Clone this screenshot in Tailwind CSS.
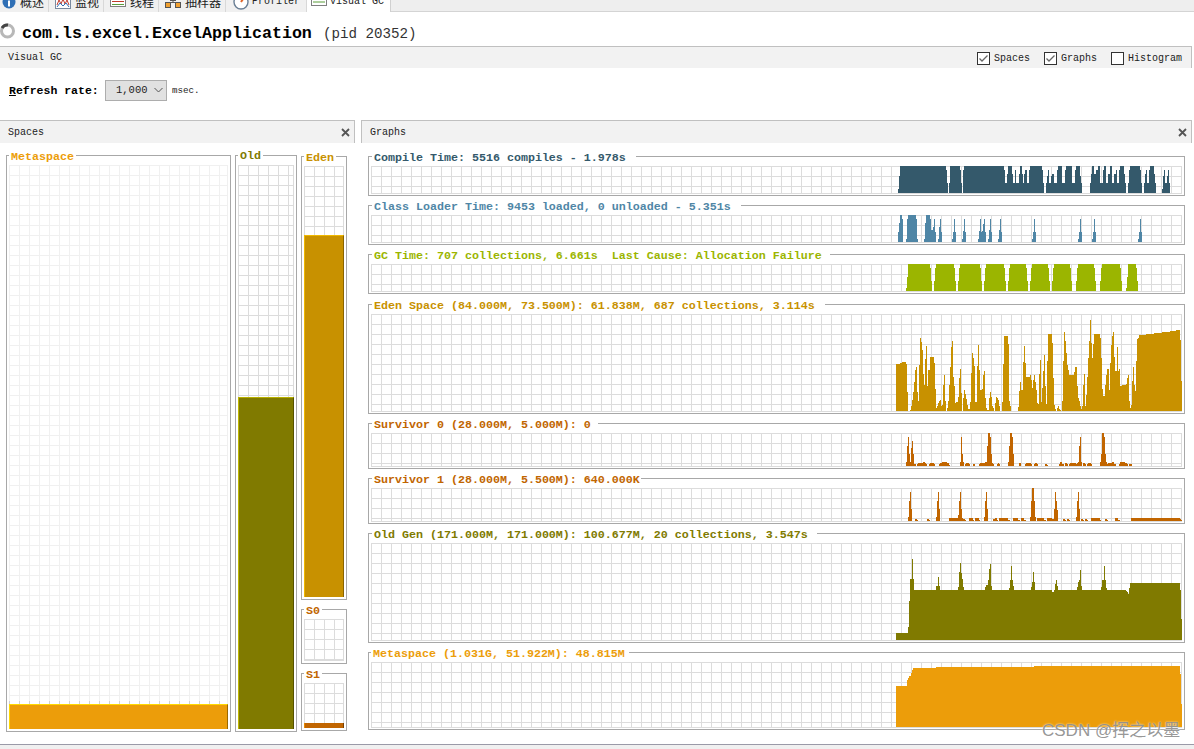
<!DOCTYPE html>
<html lang="zh">
<head>
<meta charset="utf-8">
<script src="https://cdn.jsdelivr.net/npm/@tailwindcss/browser@4"></script>
<title>Visual GC</title>
</head>
<body class="bg-white">
<div class="relative w-[1194px] h-[749px] overflow-hidden bg-white text-[#222] [font-family:'Liberation_Mono','Noto_Sans_CJK_SC',monospace]">

  <!-- tabs -->
  <div class="flex h-[12px] overflow-hidden">
    <div class="flex h-[12px] w-[49px] items-center bg-[#f0f0f0] border-r border-[#d8d8d8] border-b-0">
      <svg class="shrink-0 -mt-[8px] ml-[1px]" width="15" height="16" viewBox="0 0 15 16"><circle cx="8" cy="8" r="6.5" fill="#2f6fb5"/><rect x="7" y="3" width="2" height="2" fill="#fff"/><rect x="7" y="6.5" width="2" height="6" fill="#fff"/></svg>
      <span class="-mt-[8px] ml-[4px] text-[12px] leading-[16px] [font-family:'Noto_Sans_CJK_SC',sans-serif]">概述</span>
    </div>
    <div class="flex h-[12px] w-[55px] items-center bg-[#f0f0f0] border-r border-[#d8d8d8]">
      <svg class="shrink-0 -mt-[8px] ml-[6px]" width="16" height="16" viewBox="0 0 16 16"><rect x="0.5" y="2.5" width="15" height="12" fill="#fff" stroke="#7a8aa0"/><path d="M2 11L4 6L6 10L8 5L10 10L12 6L14 11" fill="none" stroke="#c0392b"/><path d="M2 13L5 9L8 12L11 9L14 13" fill="none" stroke="#2f6fb5"/></svg>
      <span class="-mt-[8px] ml-[4px] text-[12px] leading-[16px] [font-family:'Noto_Sans_CJK_SC',sans-serif]">监视</span>
    </div>
    <div class="flex h-[12px] w-[55px] items-center bg-[#f0f0f0] border-r border-[#d8d8d8]">
      <svg class="shrink-0 -mt-[8px] ml-[6px]" width="16" height="16" viewBox="0 0 16 16"><rect x="0.5" y="1.5" width="15" height="11" fill="#fff" stroke="#7f7f7f"/><rect x="2" y="4" width="12" height="1" fill="#d9a520"/><rect x="2" y="7" width="12" height="1" fill="#c0392b"/><rect x="2" y="10" width="12" height="1" fill="#5a9e3a"/></svg>
      <span class="-mt-[8px] ml-[4px] text-[12px] leading-[16px] [font-family:'Noto_Sans_CJK_SC',sans-serif]">线程</span>
    </div>
    <div class="flex h-[12px] w-[67px] items-center bg-[#f0f0f0] border-r border-[#d8d8d8]">
      <svg class="shrink-0 -mt-[8px] ml-[6px]" width="16" height="16" viewBox="0 0 16 16"><rect x="5.5" y="1.5" width="5" height="5" fill="#f0c860" stroke="#555"/><rect x="0.5" y="8.5" width="5" height="5" fill="#f0a030" stroke="#555"/><rect x="10.5" y="8.5" width="5" height="5" fill="#f0a030" stroke="#555"/><path d="M8 6.5V8.5M3 8.5H13" stroke="#555" fill="none"/></svg>
      <span class="-mt-[8px] ml-[4px] text-[12px] leading-[16px] [font-family:'Noto_Sans_CJK_SC',sans-serif]">抽样器</span>
    </div>
    <div class="flex h-[12px] w-[81px] items-center bg-[#f0f0f0] border-r border-[#d8d8d8]">
      <svg class="shrink-0 -mt-[8px] ml-[7px]" width="16" height="16" viewBox="0 0 16 16"><circle cx="8" cy="8" r="7" fill="#fff" stroke="#6a7f95" stroke-width="1.4"/><path d="M8 8L11 3.5" stroke="#e0662a" stroke-width="2"/></svg>
      <span class="-mt-[8px] ml-[3px] text-[10px] leading-[16px]">Profiler</span>
    </div>
    <div class="flex h-[12px] w-[84px] items-center bg-white border-r border-[#d0d0d0]">
      <svg class="shrink-0 -mt-[8px] ml-[4px]" width="16" height="16" viewBox="0 0 16 16"><rect x="0.5" y="0.5" width="15" height="11" fill="#fff" stroke="#7f7f7f"/><path d="M2 5H14" stroke="#d9a520"/><path d="M2 8H14" stroke="#5a9e3a"/></svg>
      <span class="-mt-[8px] ml-[3px] text-[10px] leading-[16px]">Visual GC</span>
    </div>
    <div class="flex-1 h-[12px] bg-[#eeeeee] border-b border-[#d4d4d4]"></div>
  </div>

  <!-- title -->
  <div class="flex h-[34px] items-center pt-[10px]">
    <svg class="-mt-[6px] shrink-0" width="16" height="18" viewBox="0 0 16 18"><circle cx="7.5" cy="9" r="6" fill="none" stroke="#b8b8b8" stroke-width="3"/><path d="M2 6A6 6 0 0 1 8 3" fill="none" stroke="#444" stroke-width="3"/></svg>
    <span class="ml-[6px] text-[16.67px] leading-[22px] font-bold text-black">com.ls.excel.ExcelApplication</span>
    <span class="ml-[11px] text-[14.2px] leading-[22px] text-[#333]">(pid 20352)</span>
  </div>

  <!-- Visual GC bar -->
  <div class="flex h-[22px] w-[1192px] items-center justify-between bg-[#f2f2f2] border-t border-r border-[#c0c0c0] pl-[8px] pr-[9px] pt-[2px]">
    <span class="text-[10px] leading-[14px] -mt-[1px]">Visual GC</span>
    <div class="flex items-center">
      <span class="-mt-[1px] flex h-[13px] w-[13px] items-center justify-center bg-white border border-[#333]"><svg width="11" height="11" viewBox="0 0 11 11"><path d="M1.5 5.5L4 8L9.5 2.5" fill="none" stroke="#666" stroke-width="1.3"/></svg></span>
      <span class="ml-[4px] text-[10px] leading-[14px]">Spaces</span>
      <span class="-mt-[1px] ml-[14px] flex h-[13px] w-[13px] items-center justify-center bg-white border border-[#333]"><svg width="11" height="11" viewBox="0 0 11 11"><path d="M1.5 5.5L4 8L9.5 2.5" fill="none" stroke="#666" stroke-width="1.3"/></svg></span>
      <span class="ml-[4px] text-[10px] leading-[14px]">Graphs</span>
      <span class="-mt-[1px] ml-[14px] h-[13px] w-[13px] bg-white border border-[#333]"></span>
      <span class="ml-[4px] text-[10px] leading-[14px]">Histogram</span>
    </div>
  </div>

  <!-- refresh row -->
  <div class="flex h-[52px] items-center pl-[9px] pb-[7px]">
    <span class="text-[11.5px] leading-[14px] font-bold w-[96px] text-black"><span class="underline">R</span>efresh rate:</span>
    <div class="-mt-px flex h-[21px] w-[62px] items-center bg-[#e1e1e1] border border-[#adadad] pl-[10px]">
      <span class="text-[10.5px] leading-[14px]">1,000</span>
      <svg class="ml-[6px]" width="9" height="6" viewBox="0 0 9 6"><path d="M0.5 1L4.5 5L8.5 1" fill="none" stroke="#555"/></svg>
    </div>
    <span class="ml-[5px] text-[9.2px] leading-[14px]">msec.</span>
  </div>

  <!-- panels -->
  <div class="flex h-[624px] items-stretch">
    <!-- Spaces -->
    <div class="w-[355px] flex flex-col">
      <div class="flex h-[23px] items-center justify-between bg-[#f2f2f2] border-t border-r border-[#c0c0c0] pl-[8px] pr-[4px]">
        <span class="mt-[2px] text-[10px] leading-[14px]">Spaces</span>
        <svg width="9" height="9" viewBox="0 0 9 9"><path d="M1 1L8 8M8 1L1 8" stroke="#555" stroke-width="1.8"/></svg>
      </div>
      <div class="flex gap-[4px] pl-[6px] pt-[12px]">
        <!-- Metaspace -->
        <div class="relative flex h-[577px] w-[225px] flex-col border border-[#a8a8a8] px-[2px] pt-[9px] pb-[2px]">
          <span class="absolute left-[2px] -top-[6px] bg-white px-[2px] text-[11.67px] leading-[14px] font-bold text-[#ec9d0a]">Metaspace</span>
          <div class="flex flex-1 flex-col justify-end border-r border-b border-[#f0f0f0] bg-[linear-gradient(#f0f0f0_1px,transparent_1px),linear-gradient(90deg,#f0f0f0_1px,transparent_1px)] bg-[size:10px_10px]">
            <div class="h-[3px] bg-[linear-gradient(90deg,#d0d0d0_1px,transparent_1px)] bg-[size:10px_10px]"></div>
            <div class="h-[25px] -mb-px -mr-px bg-[#ec9d0a] border-t border-l border-t-[#ffd800] border-l-[#ffd800] border-r border-r-[#9a6800]"></div>
          </div>
        </div>
        <!-- Old -->
        <div class="relative flex h-[577px] w-[62px] flex-col border border-[#a8a8a8] px-[2px] pt-[9px] pb-[2px]">
          <span class="absolute left-[2px] -top-[7px] bg-white px-[2px] text-[11.67px] leading-[14px] font-bold text-[#807a00]">Old</span>
          <div class="flex flex-1 flex-col justify-end border-r border-b border-[#dcdcdc] bg-[linear-gradient(#dcdcdc_1px,transparent_1px),linear-gradient(90deg,#dcdcdc_1px,transparent_1px)] bg-[size:10px_10px]">
            <div class="h-[332px] -mb-px -mr-px bg-[#807a00] border-t border-l border-t-[#b8b000] border-l-[#c0b800] border-r border-r-[#565200]"></div>
          </div>
        </div>
        <!-- Eden / S0 / S1 -->
        <div class="flex w-[46px] flex-col gap-[9px] pt-px">
          <div class="relative flex h-[444px] flex-col border border-[#a8a8a8] px-[2px] pt-[9px] pb-[2px]">
            <span class="absolute left-[2px] -top-[6px] bg-white px-[2px] text-[11.67px] leading-[14px] font-bold text-[#c89100]">Eden</span>
            <div class="flex flex-1 flex-col justify-end border-r border-b border-[#dcdcdc] bg-[linear-gradient(#dcdcdc_1px,transparent_1px),linear-gradient(90deg,#dcdcdc_1px,transparent_1px)] bg-[size:10px_10px]">
              <div class="h-[362px] -mb-px -mr-px bg-[#c89100] border-t border-l border-t-[#f0b800] border-l-[#f0b800] border-r border-r-[#8a6400]"></div>
            </div>
          </div>
          <div class="relative flex h-[55px] flex-col border border-[#a8a8a8] px-[2px] pt-[9px] pb-[2px]">
            <span class="absolute left-[2px] -top-[6px] bg-white px-[2px] text-[11.67px] leading-[14px] font-bold text-[#c16500]">S0</span>
            <div class="flex-1 border-r border-b border-[#dcdcdc] bg-[linear-gradient(#dcdcdc_1px,transparent_1px),linear-gradient(90deg,#dcdcdc_1px,transparent_1px)] bg-[size:10px_10px]"></div>
          </div>
          <div class="relative flex h-[58px] flex-col border border-[#a8a8a8] px-[2px] pt-[9px] pb-[2px]">
            <span class="absolute left-[2px] -top-[6px] bg-white px-[2px] text-[11.67px] leading-[14px] font-bold text-[#c16500]">S1</span>
            <div class="flex flex-1 flex-col justify-end border-r border-b border-[#dcdcdc] bg-[linear-gradient(#dcdcdc_1px,transparent_1px),linear-gradient(90deg,#dcdcdc_1px,transparent_1px)] bg-[size:10px_10px]">
              <div class="h-[5px] -mb-px -mr-px bg-[#c16500] border-l border-l-[#e88a00] border-r border-r-[#7a4000]"></div>
            </div>
          </div>
        </div>
      </div>
    </div>

    <!-- Graphs -->
    <div class="ml-[6px] w-[831px] flex flex-col">
      <div class="flex h-[23px] items-center justify-between bg-[#f2f2f2] border-t border-l border-r border-[#c0c0c0] pl-[8px] pr-[4px]">
        <span class="mt-[2px] text-[10px] leading-[14px]">Graphs</span>
        <svg width="9" height="9" viewBox="0 0 9 9"><path d="M1 1L8 8M8 1L1 8" stroke="#555" stroke-width="1.8"/></svg>
      </div>
      <div class="flex flex-col gap-[9px] pl-[7px] pt-[13px]">

        <div class="relative flex h-[40px] w-[817px] flex-col border border-[#a8a8a8] px-[2px] pt-[9px] pb-[1px]">
          <span class="absolute left-[3px] -top-[6px] bg-white pl-[2px] pr-[10px] text-[11.67px] leading-[14px] font-bold whitespace-pre text-[#34596b]">Compile Time: 5516 compiles - 1.978s</span>
          <div class="relative flex-1 border-r border-b border-[#dcdcdc] bg-[linear-gradient(#dcdcdc_1px,transparent_1px),linear-gradient(90deg,#dcdcdc_1px,transparent_1px)] bg-[size:10px_10px]">
            <svg class="absolute -right-px bottom-0 h-full w-[292px] fill-[#34596b]" viewBox="0 48 876 81" preserveAspectRatio="none" shape-rendering="crispEdges"><path d="M24 129V118H27V78H30V48H168V60H171V100H174V129ZM177 129V100H180V48H210V60H213V100H216V129ZM219 129V60H222V48H342V60H345V100H351V72H354V48H366V72H369V100H375V60H378V100H387V72H390V48H396V72H399V100H402V72H405V60H411V100H417V60H420V48H456V60H459V100H462V129ZM468 129V100H471V78H474V60H477V100H483V78H486V72H492V100H501V60H504V48H516V100H525V60H528V48H546V100H555V60H558V48H570V78H573V100H576V129ZM600 129V100H603V72H606V48H612V72H618V60H624V48H630V100H639V60H642V48H648V100H654V72H660V48H666V100H672V72H678V60H681V100H687V60H690V48H702V72H705V100H708V129ZM714 129V100H717V60H720V48H750V60H753V100H756V129ZM762 129V100H765V72H768V60H771V100H777V60H780V48H792V72H795V100H798V129ZM816 129V118H819V78H822V60H825V100H831V78H834V60H837V100H840V129Z"/></svg>
          </div>
        </div>

        <div class="relative flex h-[40px] w-[817px] flex-col border border-[#a8a8a8] px-[2px] pt-[9px] pb-[1px]">
          <span class="absolute left-[3px] -top-[6px] bg-white pl-[2px] pr-[10px] text-[11.67px] leading-[14px] font-bold whitespace-pre text-[#4f86a6]">Class Loader Time: 9453 loaded, 0 unloaded - 5.351s</span>
          <div class="relative flex-1 border-r border-b border-[#dcdcdc] bg-[linear-gradient(#dcdcdc_1px,transparent_1px),linear-gradient(90deg,#dcdcdc_1px,transparent_1px)] bg-[size:10px_10px]">
            <svg class="absolute -right-px bottom-0 h-full w-[292px] fill-[#4f86a6]" viewBox="0 195 876 81" preserveAspectRatio="none" shape-rendering="crispEdges"><path d="M24 276V246H27V219H30V195H36V207H39V276ZM48 276V267H51V207H54V195H78V207H81V267H84V276ZM102 276V267H105V219H108V195H120V207H123V240H129V231H132V207H135V246H138V276ZM144 276V267H147V231H150V207H153V246H156V276ZM186 276V267H189V246H192V207H195V246H198V276ZM216 276V267H219V243H222V207H225V246H228V276ZM264 276V267H267V243H270V207H273V246H276V243H279V222H282V207H285V246H288V276ZM294 276V267H297V240H300V207H303V246H306V276ZM324 276V267H327V240H330V207H333V246H336V276ZM426 276V267H429V246H432V207H435V246H438V276ZM564 276V267H567V246H570V207H573V246H576V276ZM606 276V267H609V246H612V207H615V246H618V276ZM744 276V267H747V246H750V207H753V246H756V276Z"/></svg>
          </div>
        </div>

        <div class="relative flex h-[40px] w-[817px] flex-col border border-[#a8a8a8] px-[2px] pt-[9px] pb-[1px]">
          <span class="absolute left-[3px] -top-[6px] bg-white pl-[2px] pr-[8px] text-[11.67px] leading-[14px] font-bold whitespace-pre text-[#9bb500]">GC Time: 707 collections, 6.661s  Last Cause: Allocation Failure</span>
          <div class="relative flex-1 border-r border-b border-[#dcdcdc] bg-[linear-gradient(#dcdcdc_1px,transparent_1px),linear-gradient(90deg,#dcdcdc_1px,transparent_1px)] bg-[size:10px_10px]">
            <svg class="absolute -right-px bottom-0 h-full w-[292px] fill-[#9bb500]" viewBox="0 343 876 81" preserveAspectRatio="none" shape-rendering="crispEdges"><path d="M48 424V414H51V381H54V343H120V354H123V393H126V424ZM132 424V393H135V354H138V343H192V354H195V393H198V424ZM204 424V393H207V354H210V343H270V354H273V393H276V424ZM282 424V393H285V354H288V343H342V354H345V393H348V424ZM354 424V393H357V354H360V343H408V354H411V393H414V424ZM420 424V393H423V354H426V343H474V354H477V393H480V424ZM486 424V393H489V354H492V343H540V354H543V393H546V424ZM558 424V393H561V354H564V343H612V354H615V393H618V424ZM630 424V393H633V354H636V343H690V354H693V393H696V424ZM708 424V414H711V381H714V343H738V354H741V393H744V424Z"/></svg>
          </div>
        </div>

        <div class="relative mt-px flex h-[110px] w-[817px] flex-col border border-[#a8a8a8] px-[2px] pt-[9px] pb-[1px]">
          <span class="absolute left-[3px] -top-[6px] bg-white pl-[2px] pr-[10px] text-[11.67px] leading-[14px] font-bold whitespace-pre text-[#c89100]">Eden Space (84.000M, 73.500M): 61.838M, 687 collections, 3.114s</span>
          <div class="relative flex-1 border-r border-b border-[#dcdcdc] bg-[linear-gradient(#dcdcdc_1px,transparent_1px),linear-gradient(90deg,#dcdcdc_1px,transparent_1px)] bg-[size:10px_10px]">
            <svg class="absolute -right-px bottom-0 h-full w-[292px] fill-[#c89100]" viewBox="0 43 876 291" preserveAspectRatio="none" shape-rendering="crispEdges"><path d="M18 334V192H30V189H36V186H48V192H51V276H54V334H60V330H63V318H66V300H69V276H72V246H75V210H78V201H81V276H84V303H87V195H90V114H93V126H96V150H99V222H102V255H105V177H108V138H111V258H114V210H120V171H132V189H135V267H138V324H141V318H144V309H147V303H150V300H153V318H156V315H159V255H162V225H165V303H168V334H171V324H174V303H177V255H180V201H183V141H186V123H189V231H192V258H195V309H198V306H204V291H207V234H210V207H213V279H216V334H219V294H222V270H225V282H228V297H231V315H234V327H240V306H243V219H246V159H249V174H252V198H255V306H261V198H264V135H267V210H270V270H276V267H279V225H282V213H285V294H288V324H291V330H297V294H300V276H303V291H306V318H309V324H312V334H315V309H318V291H321V294H324V300H327V318H330V334H336V306H339V192H342V108H354V132H357V303H360V318H363V334H384V321H387V273H390V246H393V270H399V186H402V138H405V189H408V231H420V225H423V240H426V264H429V240H432V225H435V246H438V270H441V309H444V312H447V222H450V180H453V306H456V264H459V213H462V165H465V258H468V312H471V183H474V102H486V129H489V234H492V315H495V327H498V334H501V324H504V318H507V327H510V330H513V334H516V303H519V183H522V96H525V123H528V159H531V195H534V210H537V225H552V216H555V201H561V258H564V294H567V303H570V318H573V327H576V318H579V255H582V222H585V318H588V285H591V231H594V174H597V123H600V60H603V129H606V174H609V132H612V102H630V114H633V174H636V267H639V288H645V255H648V225H651V207H657V270H660V189H663V135H666V108H669V96H672V171H675V213H681V141H684V213H687V207H690V258H696V255H708V252H711V234H714V225H717V303H720V324H723V315H726V243H729V201H732V255H735V273H738V183H741V117H744V114H747V105H768V102H792V99H816V96H840V93H858V90H870V120H873V243H876V334Z"/></svg>
          </div>
        </div>

        <div class="relative flex h-[46px] w-[817px] flex-col border border-[#a8a8a8] px-[2px] pt-[9px] pb-[1px]">
          <span class="absolute left-[3px] -top-[6px] bg-white pl-[2px] pr-[7px] text-[11.67px] leading-[14px] font-bold whitespace-pre text-[#c16500]">Survivor 0 (28.000M, 5.000M): 0</span>
          <div class="relative flex-1 border-r border-b border-[#dcdcdc] bg-[linear-gradient(#dcdcdc_1px,transparent_1px),linear-gradient(90deg,#dcdcdc_1px,transparent_1px)] bg-[size:10px_10px]">
            <svg class="absolute -right-px bottom-0 h-full w-[292px] fill-[#c16500]" viewBox="0 40 876 99" preserveAspectRatio="none" shape-rendering="crispEdges"><path d="M48 139V126H51V78H54V51H57V102H60V126H63V84H66V63H69V102H72V132H78V139ZM81 139V132H84V129H99V126H105V129H108V132H111V139ZM117 139V132H120V129H132V132H135V139ZM147 139V132H150V129H156V127H171V130H177V135H180V139ZM210 139V126H213V51H216V102H219V126H222V139ZM225 139V132H228V129H237V133H240V139ZM249 139V132H255V139ZM267 139V132H270V129H285V126H291V78H294V40H300V51H303V102H306V129H309V134H312V139ZM321 139V132H324V129H327V133H330V139ZM354 139V126H357V78H360V40H366V51H369V102H372V139ZM387 139V130H393V139ZM405 139V132H408V129H423V133H426V139ZM432 139V132H435V129H441V133H444V139ZM465 139V132H471V135H474V139ZM507 139V132H510V126H516V132H519V134H522V139ZM525 139V129H531V134H534V139ZM537 139V132H540V129H558V132H561V129H564V126H567V78H570V51H573V126H576V139ZM579 139V129H585V134H588V139ZM591 139V132H594V129H603V134H606V139ZM630 139V126H633V102H636V40H642V51H645V102H648V126H651V132H654V129H666V126H672V132H675V134H678V139ZM687 139V132H690V126H705V129H711V134H714V139ZM717 139V132H723V134H726V139Z"/></svg>
          </div>
        </div>

        <div class="relative flex h-[46px] w-[817px] flex-col border border-[#a8a8a8] px-[2px] pt-[9px] pb-[1px]">
          <span class="absolute left-[3px] -top-[6px] bg-white pl-[2px] pr-[1px] text-[11.67px] leading-[14px] font-bold whitespace-pre text-[#c16500]">Survivor 1 (28.000M, 5.500M): 640.000K</span>
          <div class="relative flex-1 border-r border-b border-[#dcdcdc] bg-[linear-gradient(#dcdcdc_1px,transparent_1px),linear-gradient(90deg,#dcdcdc_1px,transparent_1px)] bg-[size:10px_10px]">
            <svg class="absolute -right-px bottom-0 h-full w-[292px] fill-[#c16500]" viewBox="0 205 876 99" preserveAspectRatio="none" shape-rendering="crispEdges"><path d="M54 304V291H57V243H60V216H63V267H66V304ZM75 304V297H81V300H84V304ZM111 304V297H117V300H120V304ZM138 304V291H141V243H144V216H147V267H150V304ZM177 304V295H204V285H207V243H210V216H213V267H216V295H219V297H225V300H228V304ZM237 304V295H249V300H252V304ZM255 304V295H267V300H270V304ZM282 304V291H285V243H288V216H291V267H294V304ZM309 304V297H315V295H321V300H324V304ZM327 304V295H354V300H360V304ZM369 304V295H384V300H390V304ZM393 304V295H402V300H408V304ZM420 304V291H423V243H426V205H432V243H435V291H438V304ZM441 304V295H462V300H468V304ZM471 304V295H486V297H492V267H495V216H498V243H501V270H504V304ZM519 304V297H525V300H528V304ZM531 304V297H537V300H540V304ZM558 304V291H561V243H564V216H567V267H570V304ZM573 304V297H579V300H582V304ZM585 304V297H591V300H594V304ZM603 304V295H630V300H633V304ZM645 304V297H651V300H654V304ZM675 304V295H684V300H690V304ZM723 304V295H870V298H873V300H876V304Z"/></svg>
          </div>
        </div>

        <div class="relative flex h-[110px] w-[817px] flex-col border border-[#a8a8a8] px-[2px] pt-[9px] pb-[1px]">
          <span class="absolute left-[3px] -top-[6px] bg-white pl-[2px] pr-[9px] text-[11.67px] leading-[14px] font-bold whitespace-pre text-[#807a00]">Old Gen (171.000M, 171.000M): 100.677M, 20 collections, 3.547s</span>
          <div class="relative flex-1 border-r border-b border-[#dcdcdc] bg-[linear-gradient(#dcdcdc_1px,transparent_1px),linear-gradient(90deg,#dcdcdc_1px,transparent_1px)] bg-[size:10px_10px]">
            <svg class="absolute -right-px bottom-0 h-full w-[292px] fill-[#807a00]" viewBox="0 40 876 291" preserveAspectRatio="none" shape-rendering="crispEdges"><path d="M18 331V309H54V291H57V213H60V147H66V87H69V147H72V180H138V168H144V141H147V168H150V180H204V171H207V126H210V99H213V129H216V147H219V171H222V180H285V171H288V165H294V150H297V117H300V102H303V168H306V180H357V174H360V150H363V108H366V150H369V168H372V180H423V171H426V156H429V126H432V156H435V180H486V186H492V180H495V162H498V150H501V168H504V180H561V171H564V156H567V150H570V120H573V168H576V180H633V171H636V150H642V108H645V150H648V174H651V180H708V183H711V186H714V192H717V174H720V159H870V180H873V267H876V331Z"/></svg>
          </div>
        </div>

        <div class="relative flex h-[78px] w-[817px] flex-col border border-[#a8a8a8] px-[2px] pt-[9px] pb-[1px]">
          <span class="absolute left-[2px] -top-[6px] bg-white pl-[2px] pr-[4px] text-[11.67px] leading-[14px] font-bold whitespace-pre text-[#ec9d0a]">Metaspace (1.031G, 51.922M): 48.815M</span>
          <div class="relative flex-1 border-r border-b border-[#dcdcdc] bg-[linear-gradient(#dcdcdc_1px,transparent_1px),linear-gradient(90deg,#dcdcdc_1px,transparent_1px)] bg-[size:10px_10px]">
            <svg class="absolute -right-px bottom-0 h-full w-[292px] fill-[#ec9d0a]" viewBox="0 396 876 195" preserveAspectRatio="none" shape-rendering="crispEdges"><path d="M18 591V468H51V450H54V444H57V438H63V429H66V420H69V414H138V411H432V408H870V432H873V522H876V591Z"/></svg>
          </div>
        </div>

      </div>
    </div>
  </div>

  <!-- status bar -->
  <div class="h-[5px] bg-[#f0f0f0] border-t border-[#9a9aa8]"></div>

  <!-- watermark -->
  <div class="absolute left-[1042px] top-[721px] text-[17px] leading-[20px] text-[#8a8a8a]/90 whitespace-pre [font-family:'Liberation_Sans','Noto_Sans_CJK_SC',sans-serif] [text-shadow:0_0_2px_rgba(255,255,255,0.9)]">CSDN @挥之以墨</div>
</div>
</body>
</html>
